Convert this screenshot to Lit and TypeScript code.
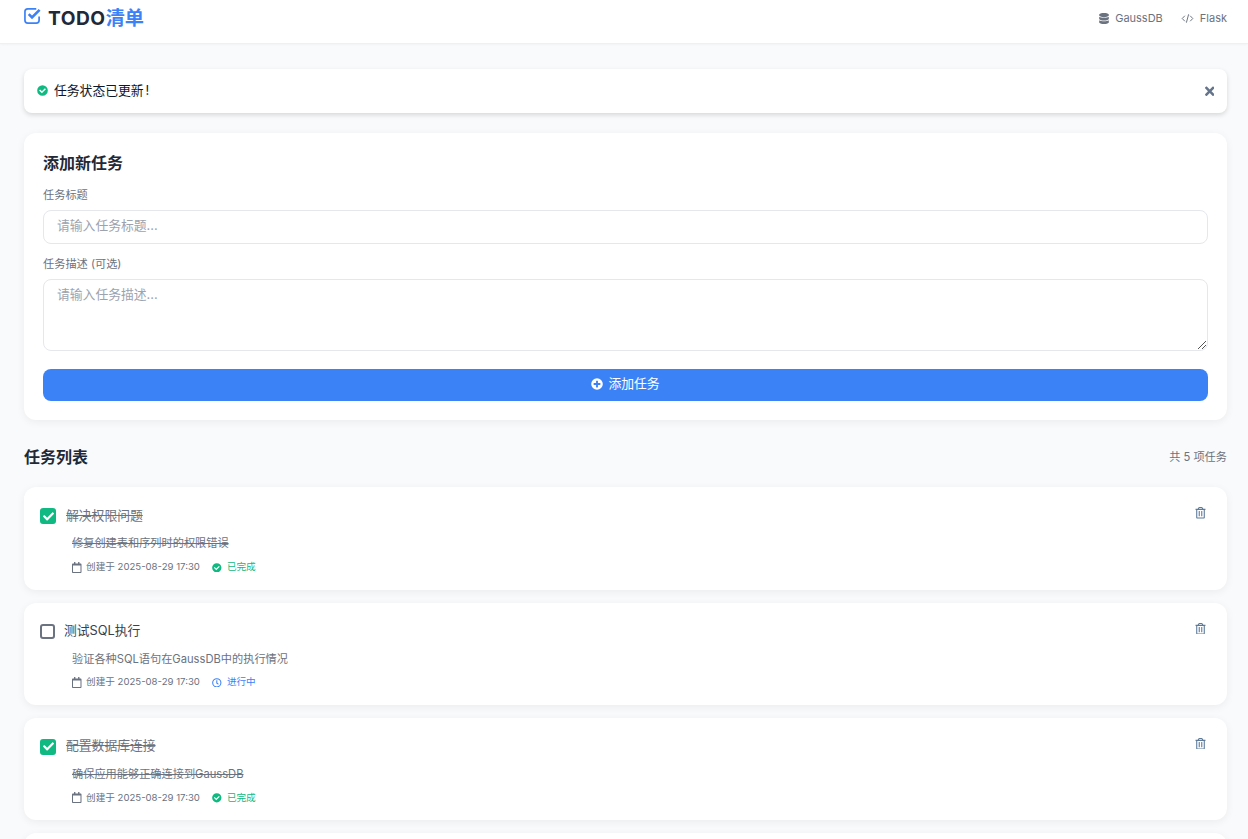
import { LitElement, html, css, svg } from "lit";
import { customElement } from "lit/decorators.js";

const I = {
  checkCircle: svg`<path d="M256 8a248 248 0 1 0 0 496 248 248 0 0 0 0-496zm-29 379L98 258l46-46 83 83 141-141 46 46z"/>`,
  clock: svg`<path d="M256 8a248 248 0 1 0 0 496 248 248 0 0 0 0-496zm0 440a192 192 0 1 1 0-384 192 192 0 0 1 0 384zm62-96-85-62c-3-2-5-6-5-10V126c0-7 5-12 12-12h32c7 0 12 5 12 12v131l67 48c5 4 6 11 3 17l-19 26c-4 5-11 7-17 4z"/>`,
  times: svg`<path d="m242 256 100-100c12-12 12-32 0-44l-22-22c-12-12-32-12-44 0L176 190 76 90c-12-12-32-12-44 0L10 112c-12 12-12 32 0 44l100 100L10 356c-12 12-12 32 0 44l22 22c12 12 32 12 44 0l100-100 100 100c12 12 32 12 44 0l22-22c12-12 12-32 0-44z"/>`,
  database: svg`<path d="M448 73v46c0 40-100 73-224 73S0 159 0 119V73C0 33 100 0 224 0s224 33 224 73zm0 103v103c0 40-100 73-224 73S0 319 0 279V176c48 33 136 48 224 48s176-15 224-48zm0 160v103c0 40-100 73-224 73S0 479 0 439V336c48 33 136 48 224 48s176-15 224-48z"/>`,
  plusCircle: svg`<path d="M256 8a248 248 0 1 0 0 496 248 248 0 0 0 0-496zm144 276c0 7-5 12-12 12h-92v92c0 7-5 12-12 12h-56c-7 0-12-5-12-12v-92h-92c-7 0-12-5-12-12v-56c0-7 5-12 12-12h92v-92c0-7 5-12 12-12h56c7 0 12 5 12 12v92h92c7 0 12 5 12 12z"/>`,
  trash: svg`<path d="M268 416h24c7 0 12-5 12-12V188c0-7-5-12-12-12h-24c-7 0-12 5-12 12v216c0 7 5 12 12 12zM432 80h-82l-34-57c-9-14-24-23-41-23H173c-17 0-32 9-41 23L98 80H16C7 80 0 87 0 96v16c0 9 7 16 16 16h16v336c0 27 21 48 48 48h288c27 0 48-21 48-48V128h16c9 0 16-7 16-16V96c0-9-7-16-16-16zM171 51c1-2 3-3 5-3h96c2 0 4 1 5 3l18 29H153zm197 413H80V128h288zM156 416h24c7 0 12-5 12-12V188c0-7-5-12-12-12h-24c-7 0-12 5-12 12v216c0 7 5 12 12 12z"/>`,
  calendar: svg`<path d="M400 64h-48V12c0-7-5-12-12-12h-40c-7 0-12 5-12 12v52H160V12c0-7-5-12-12-12h-40c-7 0-12 5-12 12v52H48C21 64 0 85 0 112v352c0 27 21 48 48 48h352c27 0 48-21 48-48V112c0-27-21-48-48-48zm-6 400H54c-3 0-6-3-6-6V160h352v298c0 3-3 6-6 6z"/>`,
  check: svg`<path d="m174 439-167-167c-10-10-10-26 0-36l36-36c10-10 26-10 36 0l113 113L434 71c10-10 26-10 36 0l36 36c10 10 10 26 0 36L210 439c-10 10-26 10-36 0z"/>`,
};

const icon = (p: unknown, vb: string, cls: string) =>
  html`<svg class=${cls} viewBox=${vb} fill="currentColor" aria-hidden="true">${p}</svg>`;

type Task = { t: string; d: string; done: boolean };
const TASKS: Task[] = [
  { t: "解决权限问题", d: "修复创建表和序列时的权限错误", done: true },
  { t: "测试SQL执行", d: "验证各种SQL语句在GaussDB中的执行情况", done: false },
  { t: "配置数据库连接", d: "确保应用能够正确连接到GaussDB", done: true },
];

@customElement("app-root")
export class AppRoot extends LitElement {
  static styles = css`
    :host {
      display: block;
      height: 839px;
      overflow: hidden;
      background: #f8fafc;
      color: #1f2937;
      font-family: Inter, "Noto Sans CJK SC", sans-serif;
      font-size: 12.8px;
      line-height: 1.5;
    }
    * { box-sizing: border-box; }
    svg { display: block; flex: none; }
    header {
      height: 44px;
      background: #fff;
      border-bottom: 1px solid #eef0f3;
      box-shadow: 0 1px 2px rgba(0,0,0,.03);
      display: flex;
      align-items: center;
      justify-content: space-between;
      padding: 0 21px 8px 24px;
    }
    .brand {
      display: flex;
      align-items: center;
      gap: 7px;
      font-size: 19.2px;
      font-weight: 700;
      line-height: 24px;
    }
    .brand b { font-weight: 700; letter-spacing: .5px; }
    .brand em { font-style: normal; color: #3b82f6; }
    .brand-icon {
      width: 17px;
      height: 17px;
      color: #3b82f6;
      margin-top: -4px;
      fill: none;
      stroke: currentColor;
    }
    .tech { display: flex; gap: 18px; font-size: 11px; color: #6b7280; margin-top: 2px; }
    .tech span { display: flex; align-items: center; gap: 6px; }
    .tech .db { width: 10px; height: 11px; }
    .tech .code {
      width: 13px;
      height: 11px;
      fill: none;
      stroke: currentColor;
      stroke-width: 48;
    }
    main { padding: 25px 21px 0 24px; }
    .alert {
      height: 44px;
      background: #fff;
      border-radius: 8px;
      box-shadow: 0 2px 5px rgba(0,0,0,.14);
      display: flex;
      align-items: center;
      padding: 0 13px;
      color: #0f172a;
      margin-bottom: 20px;
    }
    .alert-text { flex: 1; margin-left: 6px; }
    .alert-text i { font-style: normal; margin-left: 2px; }
    .alert-ok { width: 11px; height: 11px; color: #10b981; margin-top: -2px; }
    .close { width: 9.500px; height: 10.500px; color: #64748b; margin-top: 1px; }
    .card {
      background: #fff;
      border-radius: 12px;
      box-shadow: 0 2px 8px rgba(0,0,0,.06);
    }
    .form { height: 287px; padding: 18px 19px; margin-bottom: 25px; }
    h2 { margin: 0; font-size: 16px; font-weight: 700; line-height: 24px; color: #1f2937; }
    .form h2 { margin-bottom: 13px; }
    label { display: block; font-size: 11.2px; color: #6b7280; line-height: 15px; margin-bottom: 7px; }
    .field {
      border: 1px solid #e5e7eb;
      border-radius: 8px;
      padding: 5px 13px;
      color: #9ca3af;
      line-height: 20px;
    }
    .input { height: 34px; margin-bottom: 13px; }
    .textarea { height: 72px; margin-bottom: 18px; position: relative; }
    .grip { position: absolute; right: 1px; bottom: 1px; width: 9px; height: 9px; color: #555; }
    .btn {
      height: 32px;
      padding-bottom: 2px;
      border-radius: 8px;
      background: #3b82f6;
      color: #fff;
      display: flex;
      align-items: center;
      justify-content: center;
      gap: 5px;
    }
    .btn svg { width: 12px; height: 12px; }
    .list-head {
      display: flex;
      align-items: center;
      justify-content: space-between;
      height: 24px;
      margin-bottom: 18.400px;
    }
    .count { font-size: 11.2px; color: #6b7280; }
    .task {
      height: 102.400px;
      margin-bottom: 12.800px;
      padding: 16px;
      position: relative;
    }
    .row { display: flex; align-items: center; height: 26px; }
    .box {
      width: 15px;
      height: 15px;
      border: 2px solid #6b7280;
      border-radius: 3px;
      margin-right: 9px;
      flex: none;
    }
    .box.on {
      width: 16px;
      height: 16px;
      border: 0;
      margin-right: 10px;
      background: #10b981;
      display: flex;
      align-items: center;
      justify-content: center;
      color: #fff;
    }
    .box.on svg { width: 11px; height: 11px; }
    .title { color: #374151; margin-top: -2px; }
    .done .title, .done .desc { text-decoration: line-through; }
    .done .title { color: #6b7280; }
    .desc { font-size: 11.2px; color: #6b7280; margin: 4px 0 0 32px; line-height: 20px; }
    .meta {
      display: flex;
      align-items: center;
      font-size: 9.600px;
      color: #6b7280;
      margin: 6px 0 0 32px;
      height: 16px;
    }
    .meta > svg { width: 9.500px; height: 11px; margin-right: 4.600px; }
    .status { display: flex; align-items: center; margin-left: 12px; }
    .status svg { width: 9.600px; height: 9.600px; margin-right: 5.400px; }
    .status.ok { color: #10b981; }
    .status.run { color: #3b82f6; }
    .trash { position: absolute; top: 20px; right: 21px; width: 11px; height: 11.500px; color: #5d7a99; }
  `;

  render() {
    return html`
      <header>
        <div class="brand">
          <svg class="brand-icon" viewBox="0 0 18 18" aria-hidden="true">
            <path stroke-width="1.800" d="M13 2H4a3 3 0 0 0-3 3v9a3 3 0 0 0 3 3h9a3 3 0 0 0 3-3V10" />
            <path stroke-width="2.800" d="M5 7.500 8.500 11 16.500 3" />
          </svg>
          <span><b>TODO</b><em>清单</em></span>
        </div>
        <div class="tech">
          <span>${icon(I.database, "0 0 448 512", "db")}GaussDB</span>
          <span>
            <svg class="code" viewBox="0 0 640 512" aria-hidden="true">
              <path d="M190 120 60 256l130 136M450 120l130 136-130 136M375 50 265 462" />
            </svg>
            Flask
          </span>
        </div>
      </header>
      <main>
        <div class="alert">
          ${icon(I.checkCircle, "0 0 512 512", "alert-ok")}
          <span class="alert-text">任务状态已更新<i>!</i></span>
          ${icon(I.times, "0 64 352 384", "close")}
        </div>
        <section class="card form">
          <h2>添加新任务</h2>
          <label>任务标题</label>
          <div class="field input">请输入任务标题...</div>
          <label>任务描述 (可选)</label>
          <div class="field textarea">
            请输入任务描述...
            <svg class="grip" viewBox="0 0 9 9" fill="none" stroke="currentColor" stroke-width="1">
              <path d="M1 9 9 1M5 9l4-4" />
            </svg>
          </div>
          <div class="btn">${icon(I.plusCircle, "0 0 512 512", "")}<span>添加任务</span></div>
        </section>
        <div class="list-head">
          <h2>任务列表</h2>
          <span class="count">共 5 项任务</span>
        </div>
        ${TASKS.map(
          (k) => html`
            <article class="card task ${k.done ? "done" : ""}">
              <div class="row">
                <div class="box ${k.done ? "on" : ""}">
                  ${k.done ? icon(I.check, "0 0 512 512", "") : ""}
                </div>
                <span class="title">${k.t}</span>
              </div>
              <div class="desc">${k.d}</div>
              <div class="meta">
                ${icon(I.calendar, "0 0 448 512", "")}
                <span>创建于 2025-08-29 17:30</span>
                <span class="status ${k.done ? "ok" : "run"}">
                  ${icon(k.done ? I.checkCircle : I.clock, "0 0 512 512", "")}
                  ${k.done ? "已完成" : "进行中"}
                </span>
              </div>
              ${icon(I.trash, "0 0 448 512", "trash")}
            </article>
          `
        )}
        <article class="card task"></article>
      </main>
    `;
  }
}
